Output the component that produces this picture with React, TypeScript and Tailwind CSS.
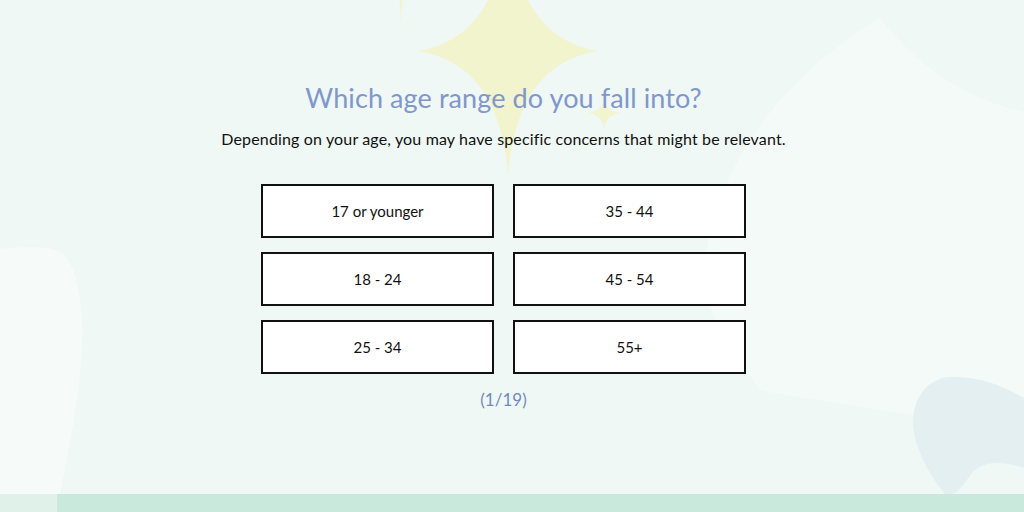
import React from "react";

const ranges = [
  ["17 or younger", "35 - 44"],
  ["18 - 24", "45 - 54"],
  ["25 - 34", "55+"],
];

function sparkle(cx: number, cy: number, w: number, up: number, down: number) {
  const k = 0.1;
  return `M ${cx} ${cy - up} Q ${cx + w * k} ${cy - up * k} ${cx + w} ${cy} Q ${cx + w * k} ${cy + down * k} ${cx} ${cy + down} Q ${cx - w * k} ${cy + down * k} ${cx - w} ${cy} Q ${cx - w * k} ${cy - up * k} ${cx} ${cy - up} Z`;
}

function Backdrop() {
  return (
    <svg className="absolute inset-0 h-full w-full" viewBox="0 0 1024 512" preserveAspectRatio="none">
      <path d="M 880 18 C 920 70 970 100 1024 112 L 1024 430 L 880 410 C 820 400 780 395 760 390 C 735 355 712 320 705 290 C 700 200 760 90 880 18 Z" fill="#f4faf8" />
      <path d="M 0 249 C 30 246 50 246 62 253 C 80 268 84 320 82 345 C 80 400 68 450 57 512 L 0 512 Z" fill="#ffffff" fillOpacity="0.45" />
      <path d="M 950 377 C 985 376 1010 390 1024 398 L 1024 468 C 1000 460 985 462 975 470 C 965 480 960 494 950 494 L 945 494 C 925 470 912 440 913 420 C 914 395 930 378 950 377 Z" fill="#e4eff2" />
      <path d={sparkle(508, 51, 90, 130, 124)} fill="#f1f4cc" />
      <path d={sparkle(401, -40, 18, 40, 63)} fill="#f1f4cc" />
      <path d={sparkle(604, 113, 16, 14, 16)} fill="#f1f4cc" />
    </svg>
  );
}

export default function App() {
  return (
    <div className="relative h-[512px] w-full overflow-hidden bg-[#eff8f5] font-['Lato',sans-serif]">
      <Backdrop />
      <div className="relative flex flex-col items-center pr-[17px] pt-[80px]">
        <h1 className="text-[27px] leading-[36px] tracking-[0.1px] text-[#7f97cc]">Which age range do you fall into?</h1>
        <p className="mt-[12px] text-[16px] leading-[22px] tracking-[0.15px] text-[#111111]">
          Depending on your age, you may have specific concerns that might be relevant.
        </p>
        <div className="mt-[34px] grid grid-cols-[233px_233px] gap-x-[19px] gap-y-[14px]">
          {ranges.flat().map((label, i) => {
            const col = i % 2;
            const row = Math.floor(i / 2);
            return (
              <button
                key={label}
                type="button"
                style={{ gridColumn: col + 1, gridRow: row + 1 }}
                className="h-[54px] border-2 border-[#111111] bg-white text-[15px] text-[#111111]"
              >
                {label}
              </button>
            );
          })}
        </div>
        <p className="mt-[14px] text-[17px] leading-[24px] text-[#7189c0]">(1/19)</p>
      </div>
      <div className="absolute bottom-0 left-0 h-[18px] w-full bg-[#c8e9dc]" />
      <div className="absolute bottom-0 left-0 h-[18px] w-[57px] bg-[#dff1e8]" />
    </div>
  );
}
